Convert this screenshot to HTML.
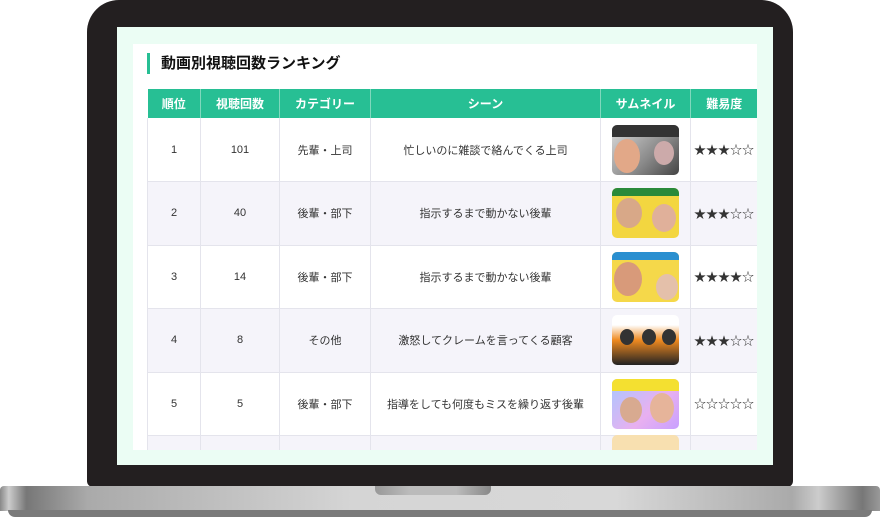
<!DOCTYPE html>
<html><head><meta charset="utf-8"><style>
*{margin:0;padding:0;box-sizing:border-box}
body{width:880px;height:517px;background:#fff;position:relative;overflow:hidden;font-family:"Liberation Sans","Noto Sans CJK JP",sans-serif}
.bezel{position:absolute;left:87px;top:0;width:706px;height:487px;background:#231f20;border-radius:32px 32px 6px 6px}
.screen{position:absolute;left:117px;top:27px;width:656px;height:438px;background:#ebfdf4}
.white{position:absolute;left:133px;top:44px;width:624px;height:406px;background:#fff;overflow:hidden}
.title{position:absolute;left:14px;top:9px;height:21px;border-left:3px solid #27bf94;padding-left:11px;font-size:15px;font-weight:bold;line-height:21px;color:#111}
table{position:absolute;left:14px;top:45px;border-collapse:collapse;width:610px;table-layout:fixed}
th{background:#27bf94;color:#fff;font-size:12px;font-weight:bold;height:29px;border-left:1px solid #7fd8bd;text-align:center}
th:first-child{border-left:none}
td{height:63.5px;border:1px solid #e4e4ec;border-top:none;text-align:center;font-size:11px;color:#333;background:#ffffff}
tr.g td{background:#f5f4fa}
td.st{font-size:12px;color:#333;letter-spacing:0}
.th{width:67px;height:50px;border-radius:5px;margin:0 auto;position:relative;overflow:hidden}
.base{position:absolute;left:0;top:486px;width:880px;height:25px;background:linear-gradient(90deg,#888 0,#ccc 1%,#777 3%,#aaa 10%,#d5d5d5 40%,#d8d8d8 70%,#aaa 90%,#ccc 93%,#777 98%,#999 100%);border-radius:4px 4px 0 0}
.base2{position:absolute;left:8px;top:510px;width:864px;height:7px;background:#7a7a7a;border-radius:0 0 20px 20px}
.notch{position:absolute;left:375px;top:486px;width:116px;height:9px;background:linear-gradient(90deg,#999,#bbb 30%,#bbb 70%,#888);border-radius:0 0 6px 6px}
.f{position:absolute;border-radius:50%}
</style></head><body>
<div class="bezel"></div>
<div class="screen"></div>
<div class="white">
<div class="title">動画別視聴回数ランキング</div>
<table>
<colgroup><col style="width:53px"><col style="width:79px"><col style="width:91px"><col style="width:230px"><col style="width:90px"><col style="width:67px"></colgroup>
<tr><th>順位</th><th>視聴回数</th><th>カテゴリー</th><th>シーン</th><th>サムネイル</th><th>難易度</th></tr>
<tr class="w"><td>1</td><td>101</td><td>先輩・上司</td><td>忙しいのに雑談で絡んでくる上司</td><td><div class="th" style="background:linear-gradient(135deg,#ddd,#888 60%,#444)"><div class="f" style="left:2px;top:14px;width:26px;height:34px;background:#e2a888"></div><div class="f" style="left:42px;top:16px;width:20px;height:24px;background:#caa"></div><div style="position:absolute;left:0;top:0;width:67px;height:12px;background:#333"></div></div></td><td class="st">★★★☆☆</td></tr>
<tr class="g"><td>2</td><td>40</td><td>後輩・部下</td><td>指示するまで動かない後輩</td><td><div class="th" style="background:#f3d640"><div class="f" style="left:4px;top:10px;width:26px;height:30px;background:#d8a888"></div><div class="f" style="left:40px;top:16px;width:24px;height:28px;background:#e0b09a"></div><div style="position:absolute;left:0;top:0;width:67px;height:8px;background:#2a8a3a"></div></div></td><td class="st">★★★☆☆</td></tr>
<tr class="w"><td>3</td><td>14</td><td>後輩・部下</td><td>指示するまで動かない後輩</td><td><div class="th" style="background:#f5d84a"><div class="f" style="left:2px;top:10px;width:28px;height:34px;background:#d89a7a"></div><div class="f" style="left:44px;top:22px;width:22px;height:26px;background:#e4c0aa"></div><div style="position:absolute;left:0;top:0;width:67px;height:8px;background:#2a8fd0"></div></div></td><td class="st">★★★★☆</td></tr>
<tr class="g"><td>4</td><td>8</td><td>その他</td><td>激怒してクレームを言ってくる顧客</td><td><div class="th" style="background:linear-gradient(180deg,#fff 0,#fff 20%,#f08a20 50%,#222 100%)"><div class="f" style="left:8px;top:14px;width:14px;height:16px;background:#333"></div><div class="f" style="left:30px;top:14px;width:14px;height:16px;background:#333"></div><div class="f" style="left:50px;top:14px;width:14px;height:16px;background:#333"></div></div></td><td class="st">★★★☆☆</td></tr>
<tr class="w"><td>5</td><td>5</td><td>後輩・部下</td><td>指導をしても何度もミスを繰り返す後輩</td><td><div class="th" style="background:linear-gradient(135deg,#a8c8ff,#e8b0f0 60%,#c8a0ff)"><div style="position:absolute;left:0;top:0;width:67px;height:12px;background:#f4e030"></div><div class="f" style="left:8px;top:18px;width:22px;height:26px;background:#d8aa90"></div><div class="f" style="left:38px;top:14px;width:24px;height:30px;background:#e6b49a"></div></div></td><td class="st">☆☆☆☆☆</td></tr>
<tr class="g"><td></td><td></td><td></td><td></td><td><div class="th" style="background:#f8e0b0;margin-top:-14px"></div></td><td></td></tr>
</table>
</div>
<div class="base"></div>
<div class="base2"></div>
<div class="notch"></div>
</body></html>
